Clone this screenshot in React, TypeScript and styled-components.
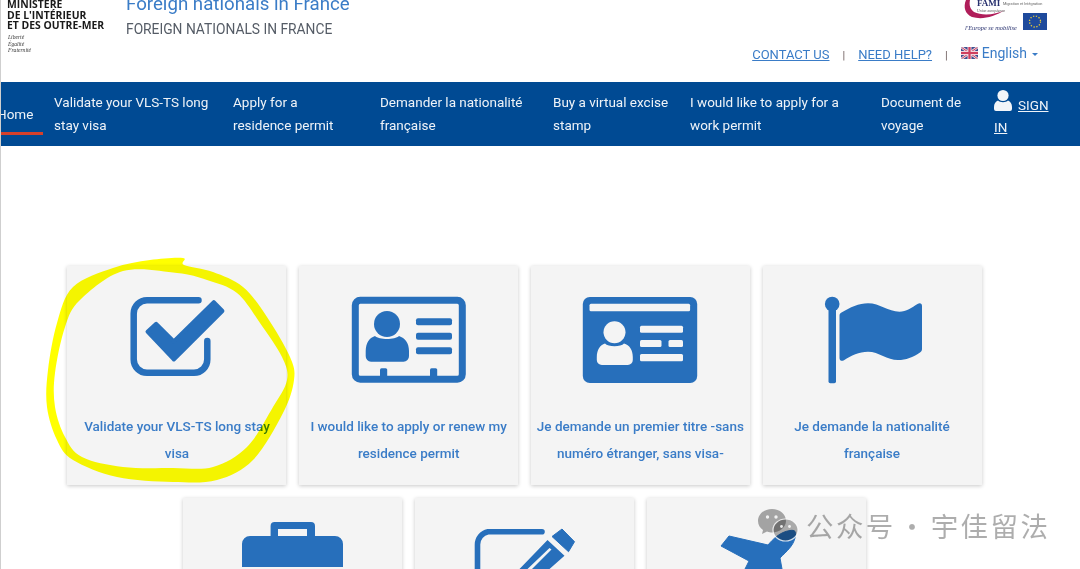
import React from "react";
import styled, { createGlobalStyle } from "styled-components";

const BLUE = "#276fbb";
const NAVY = "#004a93";
const LINK = "#3a7cc7";

const GlobalStyle = createGlobalStyle`
  html, body {
    margin: 0;
    padding: 0;
    background: #fff;
  }
  body {
    height: 569px;
    overflow: hidden;
    font-family: Roboto, "Liberation Sans", sans-serif;
  }
`;

const Page = styled.div`
  position: relative;
  width: 1080px;
  height: 569px;
  overflow: hidden;
  box-sizing: border-box;
  border-left: 1px solid #cfcfcf;
`;

const Header = styled.header`
  display: flex;
  height: 82px;
  overflow: hidden;
  box-sizing: border-box;
  padding-left: 6px;
`;

const Brand = styled.div`
  width: 119px;
  flex: none;
  margin-top: -1px;
`;

const BrandName = styled.div`
  font-family: "Open Sans", "Liberation Sans", sans-serif;
  font-weight: 700;
  font-size: 10.4px;
  line-height: 10.7px;
  color: #1a1a1a;
  white-space: nowrap;
`;

const BrandMotto = styled.div`
  margin-top: 3px;
  padding-left: 1px;
  font-family: "Liberation Serif", serif;
  font-style: italic;
  font-size: 5.6px;
  line-height: 6.6px;
  color: #333;
`;

const Titles = styled.div`
  flex: 1;
  margin-top: -8px;
`;

const Title = styled.div`
  font-size: 18.7px;
  line-height: 24px;
  color: ${LINK};
`;

const Subtitle = styled.div`
  margin-top: 4px;
  font-size: 13.8px;
  line-height: 18px;
  color: #555c66;
`;

const HeaderRight = styled.div`
  display: flex;
  flex-direction: column;
  align-items: flex-end;
  padding-right: 32px;
`;

const TopLinks = styled.div`
  display: flex;
  align-items: center;
  margin-top: 12px;
  margin-right: 10px;
  height: 20px;
  font-size: 13px;
  color: ${LINK};
`;

const TopLink = styled.a`
  color: ${LINK};
  text-decoration: underline;
`;

const Separator = styled.span`
  margin: 2px 13px 0;
  font-size: 11px;
  color: #6a5a5a;
`;

const Language = styled.span`
  display: flex;
  align-items: center;
  margin-top: -2px;
  font-size: 14px;
  gap: 4px;
`;

const Caret = styled.span`
  margin-left: 1px;
  margin-top: 2px;
  border-left: 3px solid transparent;
  border-right: 3px solid transparent;
  border-top: 3px solid ${LINK};
`;

const Nav = styled.nav`
  display: grid;
  grid-template-columns: 53px 179px 147px 173px 137px 191px 113px 1fr;
  align-items: center;
  height: 64px;
  background: ${NAVY};
  color: #eef3f8;
  font-size: 13.5px;
  line-height: 22.5px;
`;

const HomeItem = styled.div`
  position: relative;
  height: 100%;
  display: flex;
  align-items: center;
  margin-left: -4px;
  overflow: hidden;
  &::after {
    content: "";
    position: absolute;
    left: 0;
    bottom: 11px;
    width: 46px;
    height: 3px;
    background: #d5402b;
  }
`;

const NavItem = styled.div`
  padding-bottom: 1px;
  white-space: pre-line;
`;

const SignIn = styled.div`
  width: 60px;
  a {
    color: #eef3f8;
    text-decoration: underline;
  }
  svg {
    margin-right: 6px;
    vertical-align: -1px;
  }
`;

const Grid = styled.main`
  display: flex;
  flex-wrap: wrap;
  justify-content: center;
  gap: 13px 12.7px;
  width: 916px;
  margin: 120px 0 0 65.5px;
`;

const Card = styled.div`
  width: 219px;
  height: 219px;
  box-sizing: border-box;
  padding-top: 31px;
  background: #f4f4f4;
  box-shadow: 0 1px 4px rgba(0, 0, 0, 0.22);
  text-align: center;
`;

const CardIcon = styled.svg`
  display: block;
  width: 116px;
  height: 90px;
  margin: 0 auto;
  overflow: visible;
  fill: ${BLUE};
`;

const CardLabel = styled.div`
  margin-top: 26px;
  font-size: 13.5px;
  font-weight: 500;
  line-height: 27px;
  color: ${LINK};
  white-space: pre;
`;

const Highlight = styled.svg`
  position: absolute;
  left: -1px;
  top: 0;
  width: 1080px;
  height: 569px;
  pointer-events: none;
  mix-blend-mode: multiply;
`;

const Watermark = styled.div`
  position: absolute;
  left: 755px;
  top: 504px;
  display: flex;
  align-items: center;
  gap: 7px;
  height: 42px;
  pointer-events: none;
`;

const WatermarkText = styled.span`
  font-family: "Noto Sans CJK SC", "Noto Sans", sans-serif;
  font-size: 27.5px;
  letter-spacing: 2.4px;
  word-spacing: -6px;
  color: rgba(0, 0, 0, 0.32);
  white-space: pre;
`;

// closed smooth outline through hand-picked points
const smooth = (pts: number[][]) => {
  const n = pts.length;
  let d = `M${pts[0][0]} ${pts[0][1]}`;
  for (let i = 0; i < n; i++) {
    const [p0, p1, p2, p3] = [pts[(i - 1 + n) % n], pts[i], pts[(i + 1) % n], pts[(i + 2) % n]];
    const c1 = [p1[0] + (p2[0] - p0[0]) / 6, p1[1] + (p2[1] - p0[1]) / 6];
    const c2 = [p2[0] - (p3[0] - p1[0]) / 6, p2[1] - (p3[1] - p1[1]) / 6];
    d += `C${c1[0]} ${c1[1]} ${c2[0]} ${c2[1]} ${p2[0]} ${p2[1]}`;
  }
  return d + "Z";
};

const ringOuter = [
  [183, 258], [150, 260], [113, 268], [73, 287], [57, 323], [48, 370], [47, 407], [57, 440],
  [73, 460], [117, 477], [173, 482], [217, 480], [253, 460], [283, 413], [294, 380], [290, 357],
  [267, 317], [243, 287], [213, 272], [184, 265],
];

const ringInner = [
  [177, 273], [123, 271], [80, 300], [65, 327], [55, 373], [55, 407], [65, 437], [82, 457],
  [123, 467], [173, 468], [213, 467], [247, 447], [273, 407], [287, 380], [282, 357], [260, 323],
  [237, 293], [207, 280],
];

const CheckIcon = () => (
  <CardIcon viewBox="0 0 116 90">
    <path
      d="M79.5 3.2H28A13.3 13.3 0 0 0 14.7 16.5V62.5A13.3 13.3 0 0 0 28 75.8H75A13.3 13.3 0 0 0 88.3 62.5V44"
      fill="none"
      stroke={BLUE}
      strokeWidth="6.5"
      strokeLinecap="round"
    />
    <path
      d="M28.5 34.7L37.2 26.8L54.8 44.5L94.8 5.2L103.4 14L54.8 62.5Z"
      stroke={BLUE}
      strokeWidth="4"
      strokeLinejoin="round"
    />
  </CardIcon>
);

const CardHolderIcon = () => (
  <CardIcon viewBox="0 0 116 90">
    <rect x="4.3" y="3.3" width="107" height="79" rx="5" fill="none" stroke={BLUE} strokeWidth="7" />
    <circle cx="36" cy="27" r="13" />
    <path d="M24 39C28 43 44 43 48 39C54 41 58 46 58 54V59A5.5 5.5 0 0 1 52.5 64.7H20A5.5 5.5 0 0 1 14.7 59V54C15 46 18 41 24 39Z" />
    <rect x="65" y="21.3" width="36" height="7" rx="2" />
    <rect x="65" y="35.7" width="36" height="7" rx="2" />
    <rect x="65" y="50.3" width="36" height="7" rx="2" />
    <rect x="29" y="71.3" width="7.2" height="10" rx="1.5" />
    <rect x="79" y="71.3" width="7.2" height="10" rx="1.5" />
  </CardIcon>
);

const IdCardIcon = () => (
  <CardIcon viewBox="0 0 116 90">
    <rect x="0.8" y="0" width="114.4" height="86" rx="7" />
    <g fill="#f4f4f4">
      <rect x="7.5" y="6.7" width="100.6" height="7.6" rx="1.5" />
      <circle cx="32.5" cy="35.3" r="11" />
      <path d="M23 46.5C26 50 39 50 42 46.5C47.5 48 50.8 53 50.8 60V63A5 5 0 0 1 45.8 68H19.8A5 5 0 0 1 14.8 63V60C14.8 53 18 48 23 46.5Z" />
      <rect x="58" y="28.7" width="43" height="7" rx="1.5" />
      <rect x="58" y="43" width="21.5" height="7" rx="1.5" />
      <rect x="86.5" y="43" width="14.5" height="7" rx="1.5" />
      <rect x="58" y="57" width="43" height="7.3" rx="1.5" />
    </g>
  </CardIcon>
);

const FlagIcon = () => (
  <CardIcon viewBox="0 0 116 90">
    <circle cx="18.2" cy="7" r="7.3" />
    <rect x="14.5" y="8" width="7.5" height="78.3" rx="1.8" />
    <path d="M25.5 18.5C25.5 17 26.3 16.3 27.5 15.6C36 10.5 45 6.3 54 6.3C66 6.3 74 14.7 85.5 14.7C92 14.7 98 10.5 103.5 7C106 5.4 108 6.4 108 9V52C108 53.5 107.4 54.5 106 55.4C99 60 92 63 84 63C73 63 65 54.7 54 54.7C45 54.7 37 58.7 30 63.2C27.5 64.7 25.5 63.5 25.5 61Z" />
  </CardIcon>
);

const BriefcaseIcon = () => (
  <CardIcon viewBox="0 0 116 90">
    <path d="M35.6 7V-3A4 4 0 0 1 39.6 -7H76A4 4 0 0 1 80 -3V7H100A8 8 0 0 1 108 15V38H7V15A8 8 0 0 1 15 7ZM43 7H72V0H43Z" fillRule="evenodd" />
  </CardIcon>
);

const EditIcon = () => (
  <CardIcon viewBox="0 0 116 90">
    <path
      d="M75 2.8H21A13 13 0 0 0 10.5 15.5V60"
      fill="none"
      stroke={BLUE}
      strokeWidth="5.6"
      strokeLinecap="round"
    />
    <path d="M85 7.5L95 0L107.5 12.7L101.5 22.7Z" stroke={BLUE} strokeWidth="1" strokeLinejoin="round" />
    <path
      d="M80.5 11L97.5 26.7L82.5 40H52.5ZM82.5 19L60.5 40H65L84.5 20.5Z"
      fillRule="evenodd"
    />
  </CardIcon>
);

const PlaneIcon = () => (
  <CardIcon viewBox="0 0 116 90">
    <path d="M31 7L70 16C75 10 82 3 92 1.5C97 0.8 98.5 2 97 9C95 17 89 22 82 29L84 40H47L51 32L23 17Z" stroke={BLUE} strokeWidth="1" strokeLinejoin="round" />
  </CardIcon>
);

const UserGlyph = () => (
  <svg width="18" height="21" viewBox="0 0 18 21" fill="#f2f5f9">
    <ellipse cx="9" cy="5.5" rx="5.6" ry="5.5" />
    <path d="M4 10.5C6 12.8 12 12.8 14 10.5C16.5 11.5 18 14 18 17V19A2 2 0 0 1 16 21H2A2 2 0 0 1 0 19V17C0 14 1.5 11.5 4 10.5Z" />
  </svg>
);

const UkFlag = () => (
  <svg width="17" height="12" viewBox="0 0 17 12" style={{ borderRadius: 2 }}>
    <rect width="17" height="12" fill="#3d4f8f" />
    <path d="M0 0L17 12M17 0L0 12" stroke="#f1d5dc" strokeWidth="2.6" />
    <path d="M0 0L17 12M17 0L0 12" stroke="#c8476a" strokeWidth="1" />
    <path d="M8.5 0V12M0 6H17" stroke="#f1d5dc" strokeWidth="4" />
    <path d="M8.5 0V12M0 6H17" stroke="#cf3f5f" strokeWidth="2.2" />
  </svg>
);

const FamiLogo = () => (
  <svg width="86" height="32" viewBox="0 0 86 32" style={{ display: "block" }}>
    <path d="M4 0C1 7 3 14 10 17C20 20 32 17 43 10C33 15 20 16 12 12C8 9 7 5 8 0Z" fill="#b01e5a" />
    <text x="15" y="5.5" fontFamily="Liberation Serif, serif" fontWeight="700" fontSize="9" fill="#27306e">FAMI</text>
    <text x="41" y="4.8" fontFamily="Roboto, sans-serif" fontSize="3.8" fill="#666">Migration et Intégration</text>
    <text x="15" y="11.5" fontFamily="Liberation Serif, serif" fontStyle="italic" fontSize="3.8" fill="#555">Union européenne</text>
    <text x="3" y="29.5" fontFamily="Liberation Serif, serif" fontStyle="italic" fontSize="6.4" fill="#27306e">l'Europe se mobilise</text>
    <rect x="61" y="13" width="24" height="17" fill="#1e4a9c" />
    <circle cx="73" cy="21.5" r="5.5" fill="none" stroke="#e3c93a" strokeWidth="1.3" strokeDasharray="1.3 1.6" />
  </svg>
);

const WeChatMark = () => (
  <svg width="43" height="33" viewBox="0 0 43 33">
    <path
      d="M16 0C8 0 2 5 2 12C2 16 4 19 7 21L6 25L11 22.5C13 23.2 14.5 23.5 16 23.5C24 23.5 30 18 30 12C30 5 24 0 16 0Z"
      fill="rgba(0,0,0,0.33)"
    />
    <circle cx="11.5" cy="8" r="1.7" fill="rgba(255,255,255,0.85)" />
    <circle cx="20" cy="8" r="1.7" fill="rgba(255,255,255,0.85)" />
    <ellipse cx="29.5" cy="21" rx="12.5" ry="11" fill="rgba(0,0,0,0.3)" stroke="#fff" strokeOpacity="0.8" strokeWidth="1.2" />
    <circle cx="25.5" cy="17.5" r="1.4" fill="rgba(255,255,255,0.85)" />
    <circle cx="33.5" cy="17.5" r="1.4" fill="rgba(255,255,255,0.85)" />
  </svg>
);

const navItems = [
  "Validate your VLS-TS long\nstay visa",
  "Apply for a\nresidence permit",
  "Demander la nationalité\nfrançaise",
  "Buy a virtual excise\nstamp",
  "I would like to apply for a\nwork permit",
  "Document de\nvoyage",
];

const cards = [
  { icon: <CheckIcon />, label: "Validate your VLS-TS long stay\nvisa" },
  { icon: <CardHolderIcon />, label: "I would like to apply or renew my\nresidence permit" },
  { icon: <IdCardIcon />, label: "Je demande un premier titre -sans\nnuméro étranger, sans visa-" },
  { icon: <FlagIcon />, label: "Je demande la nationalité\nfrançaise" },
  { icon: <BriefcaseIcon />, label: "" },
  { icon: <EditIcon />, label: "" },
  { icon: <PlaneIcon />, label: "" },
];

const App = () => (
  <Page>
    <GlobalStyle />
    <Header>
      <Brand>
        <BrandName>
          MINISTÈRE
          <br />
          DE L'INTÉRIEUR
          <br />
          ET DES OUTRE-MER
        </BrandName>
        <BrandMotto>
          Liberté
          <br />
          Égalité
          <br />
          Fraternité
        </BrandMotto>
      </Brand>
      <Titles>
        <Title>Foreign nationals in France</Title>
        <Subtitle>FOREIGN NATIONALS IN FRANCE</Subtitle>
      </Titles>
      <HeaderRight>
        <FamiLogo />
        <TopLinks>
          <TopLink>CONTACT US</TopLink>
          <Separator>|</Separator>
          <TopLink>NEED HELP?</TopLink>
          <Separator>|</Separator>
          <Language>
            <UkFlag />
            English
            <Caret />
          </Language>
        </TopLinks>
      </HeaderRight>
    </Header>
    <Nav>
      <HomeItem>Home</HomeItem>
      {navItems.map((item) => (
        <NavItem key={item}>{item}</NavItem>
      ))}
      <SignIn>
        <UserGlyph />
        <a>SIGN IN</a>
      </SignIn>
    </Nav>
    <Grid>
      {cards.map((card, i) => (
        <Card key={i}>
          {card.icon}
          <CardLabel>{card.label}</CardLabel>
        </Card>
      ))}
    </Grid>
    <Highlight viewBox="0 0 1080 569">
      <path d={smooth(ringOuter) + smooth(ringInner)} fill="#ffff00" fillRule="evenodd" />
    </Highlight>
    <Watermark>
      <WeChatMark />
      <WatermarkText>公众号 · 宇佳留法</WatermarkText>
    </Watermark>
  </Page>
);

export default App;
